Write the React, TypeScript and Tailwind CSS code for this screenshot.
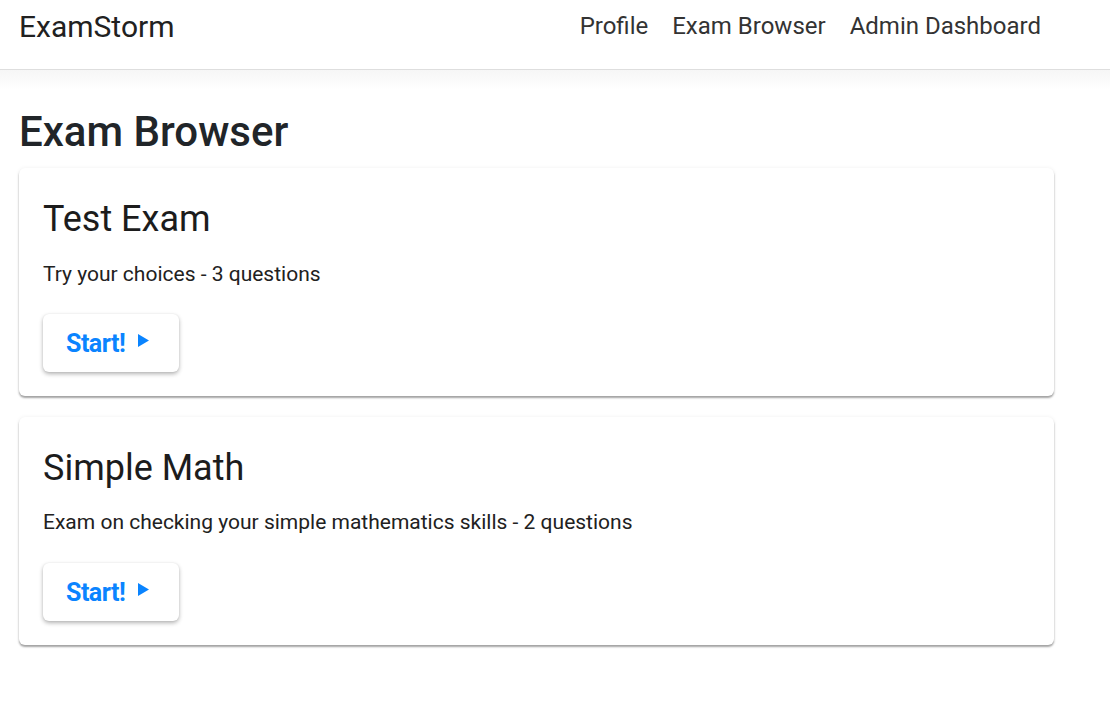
const exams = [
  { title: "Test Exam", description: "Try your choices - 3 questions" },
  {
    title: "Simple Math",
    description: "Exam on checking your simple mathematics skills - 2 questions",
  },
];

function PlayIcon() {
  return (
    <svg viewBox="0 0 11 13" className="h-[13px] w-[11px]" aria-hidden="true">
      <path d="M0 0 L11 6.5 L0 13 Z" fill="currentColor" />
    </svg>
  );
}

function ExamCard({ title, description }: { title: string; description: string }) {
  return (
    <article className="rounded-[6px] bg-white px-6 pb-6 pt-[30px] shadow-[0_2px_2px_rgba(0,0,0,0.35),0_0_4px_rgba(0,0,0,0.06)]">
      <h2 className="text-[36px] leading-[1.2] text-[#1c1c1c]">{title}</h2>
      <p className="mt-[17px] text-[21px] leading-[1.5] text-[#212121]">{description}</p>
      <button className="mt-[24px] flex h-[58px] w-[136px] items-start rounded-[6px] bg-white pl-[23px] pt-[15px] text-[#0a84ff] shadow-[0_2px_4px_rgba(0,0,0,0.3),0_0_2px_rgba(0,0,0,0.06)]">
        <span className="text-[25px] font-bold leading-[1.2] tracking-[-0.5px]">Start!</span>
        <span className="ml-[13px] mt-[5px]">
          <PlayIcon />
        </span>
      </button>
    </article>
  );
}

export default function App() {
  return (
    <div className="min-h-screen bg-white font-['Roboto',sans-serif]">
      <header className="flex h-[70px] items-start justify-between border-b border-[#dedede] bg-white pl-[19px] pr-[69px]">
        <a className="mt-[9px] text-[30px] leading-[1.2] text-[#212121]">ExamStorm</a>
        <nav className="mt-[12px] flex gap-[24px] text-[24px] leading-[1.2] text-[#333]">
          <a>Profile</a>
          <a>Exam Browser</a>
          <a>Admin Dashboard</a>
        </nav>
      </header>
      <div className="h-[20px] bg-gradient-to-b from-[#f6f6f6] to-white" />
      <main className="pl-[19px] pr-[56px]">
        <h1 className="mt-[17px] text-[42px] font-medium leading-[1.2] text-[#212529]">
          Exam Browser
        </h1>
        <div className="mt-[11px] flex flex-col gap-[21px]">
          {exams.map((exam, index) => (
            <ExamCard key={index} title={exam.title} description={exam.description} />
          ))}
        </div>
      </main>
    </div>
  );
}
